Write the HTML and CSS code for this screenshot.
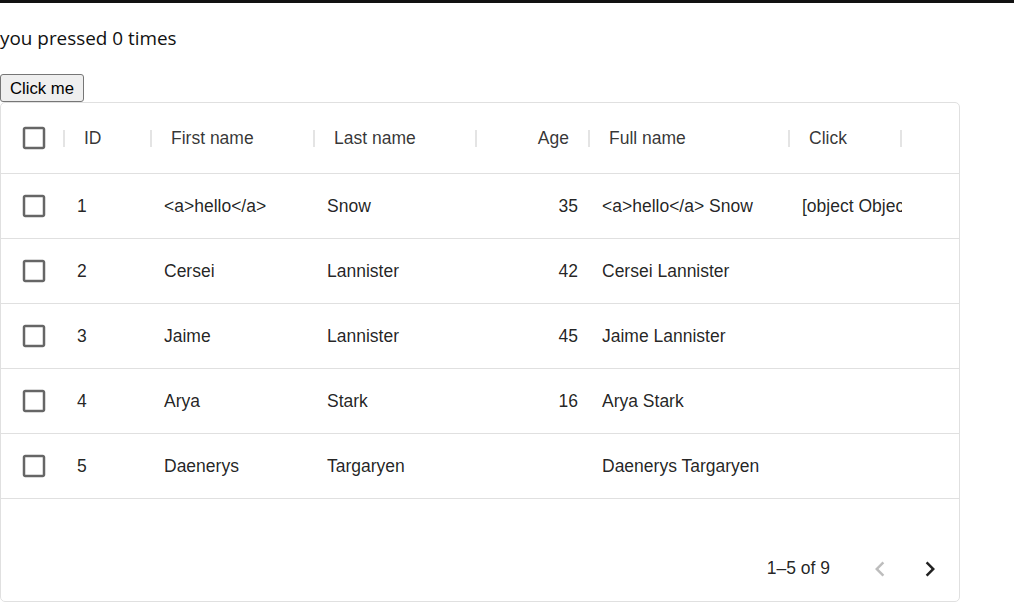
FILE: index.html
```html
<!DOCTYPE html>
<html lang="en">
<head>
    <meta charset="UTF-8">
    <title>Data grid</title>
    <link rel="stylesheet" href="styles.css">
</head>
<body>
    <div class="top-bar"></div>

    <p class="counter">you pressed 0 times</p>
    <button class="click-btn">Click me</button>

    <div class="grid">
        <div class="grid-header">
            <div class="hcell col-check">
                <span class="title center">
                    <svg class="check" viewBox="0 0 24 24"><path d="M19 5v14H5V5h14m0-2H5c-1.1 0-2 .9-2 2v14c0 1.1.9 2 2 2h14c1.1 0 2-.9 2-2V5c0-1.1-.9-2-2-2z"/></svg>
                </span>
                <span class="sep"></span>
            </div>
            <div class="hcell col-id"><span class="title">ID</span><span class="sep"></span></div>
            <div class="hcell col-first"><span class="title">First name</span><span class="sep"></span></div>
            <div class="hcell col-last"><span class="title">Last name</span><span class="sep"></span></div>
            <div class="hcell col-age"><span class="title right">Age</span><span class="sep"></span></div>
            <div class="hcell col-full"><span class="title">Full name</span><span class="sep"></span></div>
            <div class="hcell col-click"><span class="title">Click</span><span class="sep"></span></div>
        </div>

        <div class="grid-body">
            <div class="row">
                <div class="cell col-check center"><svg class="check" viewBox="0 0 24 24"><path d="M19 5v14H5V5h14m0-2H5c-1.1 0-2 .9-2 2v14c0 1.1.9 2 2 2h14c1.1 0 2-.9 2-2V5c0-1.1-.9-2-2-2z"/></svg></div>
                <div class="cell col-id">1</div>
                <div class="cell col-first">&lt;a&gt;hello&lt;/a&gt;</div>
                <div class="cell col-last">Snow</div>
                <div class="cell col-age right">35</div>
                <div class="cell col-full">&lt;a&gt;hello&lt;/a&gt; Snow</div>
                <div class="cell col-click">[object Object]</div>
            </div>
            <div class="row">
                <div class="cell col-check center"><svg class="check" viewBox="0 0 24 24"><path d="M19 5v14H5V5h14m0-2H5c-1.1 0-2 .9-2 2v14c0 1.1.9 2 2 2h14c1.1 0 2-.9 2-2V5c0-1.1-.9-2-2-2z"/></svg></div>
                <div class="cell col-id">2</div>
                <div class="cell col-first">Cersei</div>
                <div class="cell col-last">Lannister</div>
                <div class="cell col-age right">42</div>
                <div class="cell col-full">Cersei Lannister</div>
                <div class="cell col-click"></div>
            </div>
            <div class="row">
                <div class="cell col-check center"><svg class="check" viewBox="0 0 24 24"><path d="M19 5v14H5V5h14m0-2H5c-1.1 0-2 .9-2 2v14c0 1.1.9 2 2 2h14c1.1 0 2-.9 2-2V5c0-1.1-.9-2-2-2z"/></svg></div>
                <div class="cell col-id">3</div>
                <div class="cell col-first">Jaime</div>
                <div class="cell col-last">Lannister</div>
                <div class="cell col-age right">45</div>
                <div class="cell col-full">Jaime Lannister</div>
                <div class="cell col-click"></div>
            </div>
            <div class="row">
                <div class="cell col-check center"><svg class="check" viewBox="0 0 24 24"><path d="M19 5v14H5V5h14m0-2H5c-1.1 0-2 .9-2 2v14c0 1.1.9 2 2 2h14c1.1 0 2-.9 2-2V5c0-1.1-.9-2-2-2z"/></svg></div>
                <div class="cell col-id">4</div>
                <div class="cell col-first">Arya</div>
                <div class="cell col-last">Stark</div>
                <div class="cell col-age right">16</div>
                <div class="cell col-full">Arya Stark</div>
                <div class="cell col-click"></div>
            </div>
            <div class="row">
                <div class="cell col-check center"><svg class="check" viewBox="0 0 24 24"><path d="M19 5v14H5V5h14m0-2H5c-1.1 0-2 .9-2 2v14c0 1.1.9 2 2 2h14c1.1 0 2-.9 2-2V5c0-1.1-.9-2-2-2z"/></svg></div>
                <div class="cell col-id">5</div>
                <div class="cell col-first">Daenerys</div>
                <div class="cell col-last">Targaryen</div>
                <div class="cell col-age right"></div>
                <div class="cell col-full">Daenerys Targaryen</div>
                <div class="cell col-click"></div>
            </div>
        </div>

        <div class="grid-footer">
            <span class="page-info">1–5 of 9</span>
            <button class="page-btn disabled" aria-label="Previous page">
                <svg viewBox="0 0 24 24"><path d="M15.41 16.59L10.83 12l4.58-4.59L14 6l-6 6 6 6 1.41-1.41z"/></svg>
            </button>
            <button class="page-btn" aria-label="Next page">
                <svg viewBox="0 0 24 24"><path d="M8.59 16.59L13.17 12 8.59 7.41 10 6l6 6-6 6-1.41-1.41z"/></svg>
            </button>
        </div>
    </div>
</body>
</html>
```

FILE: styles.css
```css
body {
    margin: 0;
    padding: 0;
    font-family: "Open Sans", "Noto Sans", sans-serif;
    background-color: #fff;
    color: #111;
}

.top-bar {
    height: 3px;
    background-color: #111;
}

.counter {
    font-size: 18.9px;
    line-height: 27px;
    margin: 22px 0 22px;
}

.click-btn {
    display: block;
    font-family: "Liberation Sans", Arial, sans-serif;
    font-size: 16.7px;
    line-height: 19px;
    height: 28px;
    padding: 0 9px;
    border: 1px solid #767676;
    border-radius: 3px;
    background-color: #efefef;
    color: #000;
}

.grid {
    width: 958px;
    height: 498px;
    border: 1px solid #e0e0e0;
    border-radius: 5px;
    display: flex;
    flex-direction: column;
    font-family: "Liberation Sans", Arial, sans-serif;
    font-size: 17.5px;
    color: rgba(0, 0, 0, 0.87);
}

.grid-header {
    display: flex;
    height: 70px;
    border-bottom: 1px solid #e0e0e0;
}

.hcell {
    display: flex;
    align-items: center;
    padding-left: 19px;
}

.hcell .title {
    flex: 1;
    white-space: nowrap;
    color: rgba(0, 0, 0, 0.8);
}

.hcell .title.right {
    text-align: right;
    padding-right: 19px;
}

.hcell.col-check {
    padding-left: 0;
}

.title.center {
    display: flex;
    justify-content: center;
    padding-left: 4px;
}

.sep {
    width: 2px;
    height: 17px;
    background-color: #e4e4e4;
}

.grid-body {
    flex: 1;
}

.row {
    display: flex;
    height: 64px;
    border-bottom: 1px solid #e0e0e0;
}

.cell {
    display: flex;
    align-items: center;
    padding-left: 12px;
    white-space: nowrap;
    overflow: hidden;
}

.cell.center {
    justify-content: center;
    padding: 0 2px 0 4px;
}

.cell.right {
    justify-content: flex-end;
    padding: 0 12px 0 0;
}

.col-check { width: 64px; flex: none; box-sizing: border-box; }
.col-id { width: 87px; flex: none; box-sizing: border-box; }
.col-first { width: 163px; flex: none; box-sizing: border-box; }
.col-last { width: 162px; flex: none; box-sizing: border-box; }
.col-age { width: 113px; flex: none; box-sizing: border-box; }
.col-full { width: 200px; flex: none; box-sizing: border-box; }
.col-click { width: 112px; flex: none; box-sizing: border-box; }

.check {
    width: 30px;
    height: 30px;
    fill: rgba(0, 0, 0, 0.6);
}

.grid-footer {
    height: 65px;
    display: flex;
    align-items: center;
    justify-content: flex-end;
    padding-right: 4px;
}

.page-info {
    margin-right: 25px;
}

.page-btn {
    width: 50px;
    height: 50px;
    border: none;
    background: none;
    padding: 0;
    display: flex;
    align-items: center;
    justify-content: center;
    cursor: pointer;
}

.page-btn svg {
    width: 30px;
    height: 30px;
    fill: #222;
}

.page-btn.disabled svg {
    fill: rgba(0, 0, 0, 0.26);
}
```
